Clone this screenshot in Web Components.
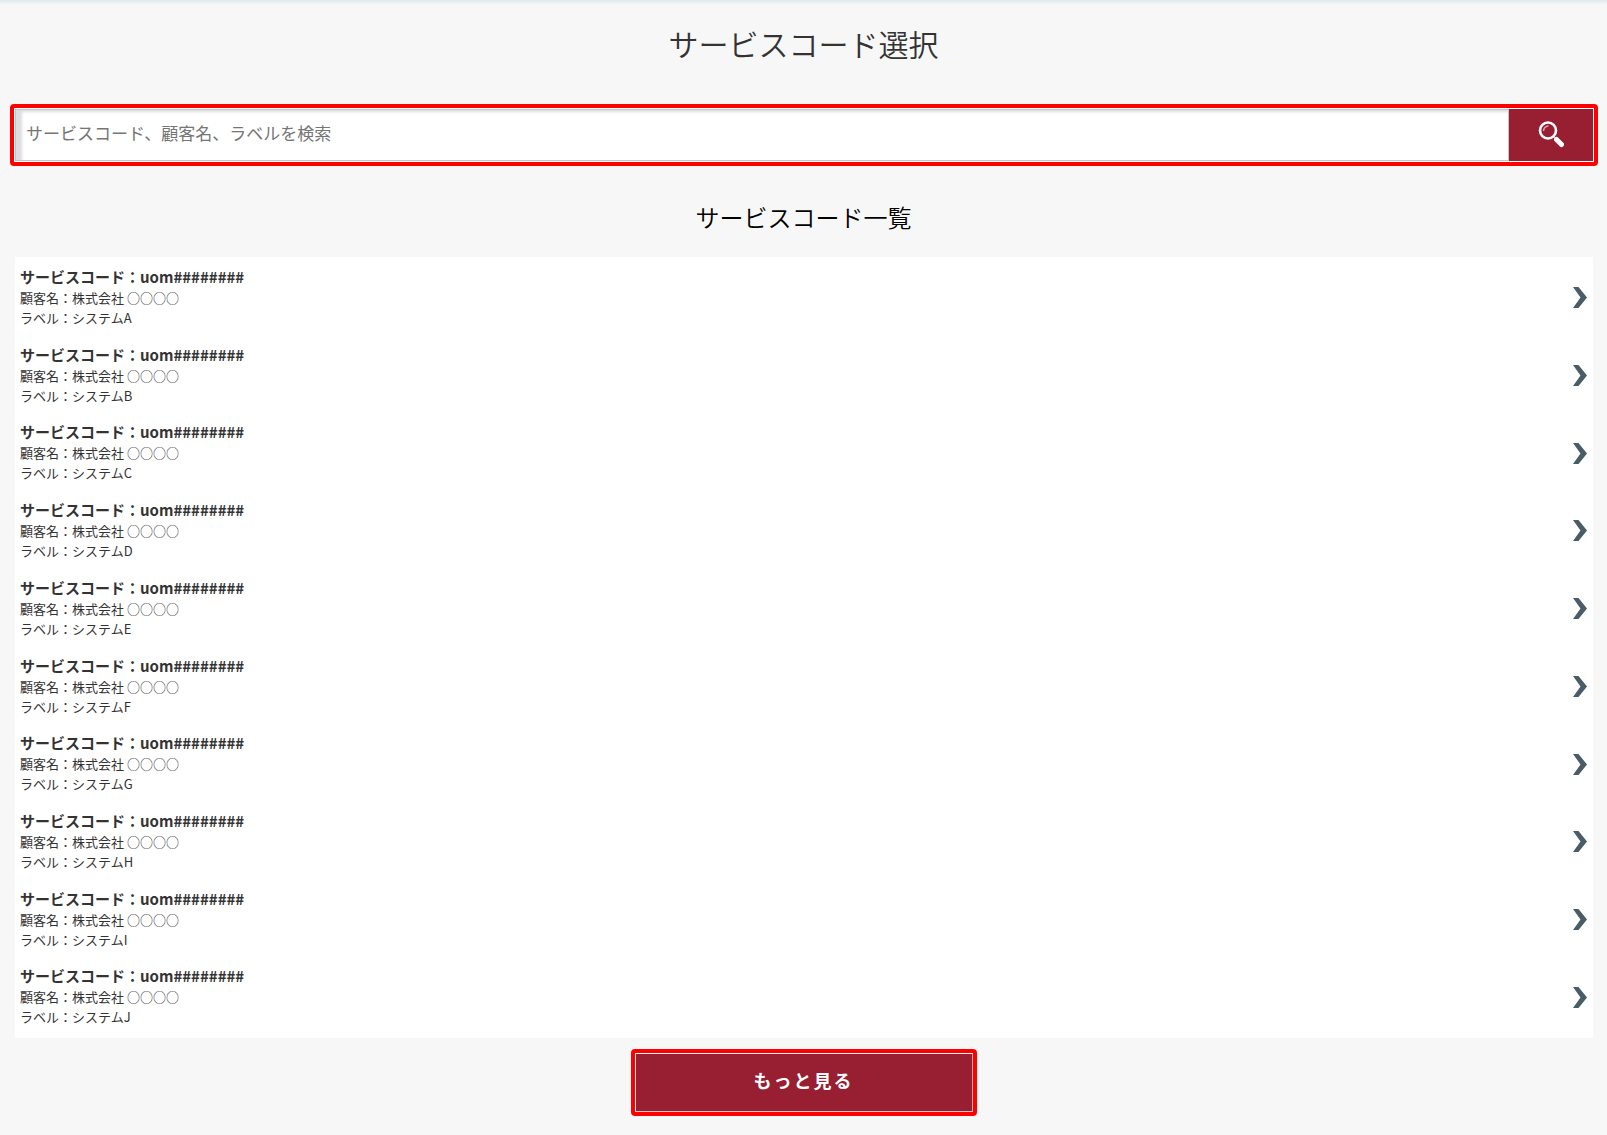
<!DOCTYPE html>
<html lang="ja">
<head>
<meta charset="utf-8">
<meta name="viewport" content="width=device-width, initial-scale=1">
<title>サービスコード選択</title>
<style>
html, body { margin: 0; }
body {
  background: #f7f7f7;
  color: #333;
  font-family: "Noto Sans CJK JP", "Noto Sans", sans-serif;
}
</style>
</head>
<body>
<service-page>
  <span slot="title">サービスコード選択</span>
  <search-bar slot="search" placeholder="サービスコード、顧客名、ラベルを検索"></search-bar>
  <span slot="subtitle">サービスコード一覧</span>
  <service-list slot="list"></service-list>
  <more-button slot="more">もっと見る</more-button>
</service-page>

<script>
class ServicePage extends HTMLElement {
  constructor() {
    super();
    this.attachShadow({ mode: "open" }).innerHTML = `
      <style>
        :host {
          display: flex; flex-direction: column; box-sizing: border-box;
          min-height: 100vh; padding: 0 0 19px;
          background: linear-gradient(#dfe9ee, #f7f7f7 5px);
        }
        h1, h2 { margin: 0; text-align: center; font-weight: 350; }
        h1 { font-size: 30px; line-height: 44px; padding: 21px 0 39px; }
        h2 { font-size: 24px; line-height: 36px; padding: 33px 0 22px; color: #000; }
        .search { padding: 0 9px 0 10px; }
        .list { flex: 1; display: flex; padding: 0 14px 0 15px; }
        .more { display: flex; justify-content: center; padding-top: 11px; }
      </style>
      <h1><slot name="title"></slot></h1>
      <div class="search"><slot name="search"></slot></div>
      <h2><slot name="subtitle"></slot></h2>
      <div class="list"><slot name="list"></slot></div>
      <div class="more"><slot name="more"></slot></div>`;
  }
}

class SearchBar extends HTMLElement {
  constructor() {
    super();
    this.attachShadow({ mode: "open" }).innerHTML = `
      <style>
        :host { display: block; border: 4px solid #f00; border-radius: 4px; background: #fff; padding: 1px; }
        form { display: flex; margin: 0; height: 52px; }
        input {
          flex: 1; min-width: 0; box-sizing: border-box; margin: 0;
          border: 1px solid #c3c7c9; border-radius: 0; outline: 0;
          padding: 0 10px 6px; background: #fff; color: #333;
          font-family: inherit; font-size: 17px; font-weight: 400;
          box-shadow: inset 6px 2px 3px #ddd;
        }
        input::placeholder { color: #757575; opacity: 1; }
        button {
          width: 84px; border: 0; margin: 0; padding: 0; background: #981f32;
          display: flex; align-items: center; justify-content: center; cursor: pointer;
        }
        svg { display: block; margin-bottom: 2px; }
      </style>
      <form>
        <input type="search" aria-label="検索">
        <button type="button" aria-label="検索">
          <svg width="26" height="28" viewBox="0 0 26 28" fill="none" stroke="#fff">
            <circle cx="10" cy="10.500" r="8" stroke-width="2.600"/>
            <path d="M5.500 11a5 5 0 0 1 5-5" stroke-width="1.600" opacity=".6"/>
            <path d="M15.500 16.500l2.500 2.500" stroke-width="1.200" opacity=".6"/>
            <path d="M18.500 19.500l5 5" stroke-width="5" stroke-linecap="round"/>
          </svg>
        </button>
      </form>`;
  }
  connectedCallback() {
    this.shadowRoot.querySelector("input").placeholder = this.getAttribute("placeholder") || "";
  }
}

class ServiceItem extends HTMLElement {
  constructor() {
    super();
    this.attachShadow({ mode: "open" }).innerHTML = `
      <style>
        :host { display: flex; flex: 1; }
        a {
          flex: 1; display: flex; justify-content: space-between; align-items: center;
          padding: 8px 6px 4px 5px; color: #333; text-decoration: none;
        }
        .text { align-self: flex-start; font-size: 13px; line-height: 20px; font-weight: 400; }
        .code { font-size: 15px; line-height: 23px; font-weight: 700; }
        svg { display: block; }
      </style>
      <a href="#">
        <div class="text">
          <div class="code">サービスコード：<slot name="code"></slot></div>
          <div>顧客名：<slot name="customer"></slot></div>
          <div>ラベル：<slot name="label"></slot></div>
        </div>
        <svg width="14" height="21" viewBox="0 0 14 21"><path d="M0 0h5.500L14 10.500 5.500 21H0L7.500 10.500z" fill="#4a5c68"/></svg>
      </a>`;
  }
}

class ServiceList extends HTMLElement {
  constructor() {
    super();
    const items = [..."ABCDEFGHIJ"].map(c => `
      <service-item>
        <span slot="code">uom########</span>
        <span slot="customer">株式会社 ○○○○</span>
        <span slot="label">システム${c}</span>
      </service-item>`).join("");
    this.attachShadow({ mode: "open" }).innerHTML = `
      <style>
        :host { flex: 1; display: flex; flex-direction: column; background: #fff; padding-bottom: 4px; }
      </style>${items}`;
  }
}

class MoreButton extends HTMLElement {
  constructor() {
    super();
    this.attachShadow({ mode: "open" }).innerHTML = `
      <style>
        :host { display: block; border: 4px solid #f00; border-radius: 4px; }
        button {
          display: block; box-sizing: border-box; width: 338px; height: 59px; margin: 0; padding: 0 0 6px;
          border: 1px solid; border-color: #f4f4f4 #b4b4b4 #c8c8c8 #f4f4f4;
          background: #981f32; color: #fff; cursor: pointer;
          font-family: inherit; font-size: 18px; font-weight: 700; letter-spacing: 2px;
        }
      </style>
      <button type="button"><slot></slot></button>`;
  }
}

customElements.define("service-page", ServicePage);
customElements.define("search-bar", SearchBar);
customElements.define("service-item", ServiceItem);
customElements.define("service-list", ServiceList);
customElements.define("more-button", MoreButton);
</script>
</body>
</html>
